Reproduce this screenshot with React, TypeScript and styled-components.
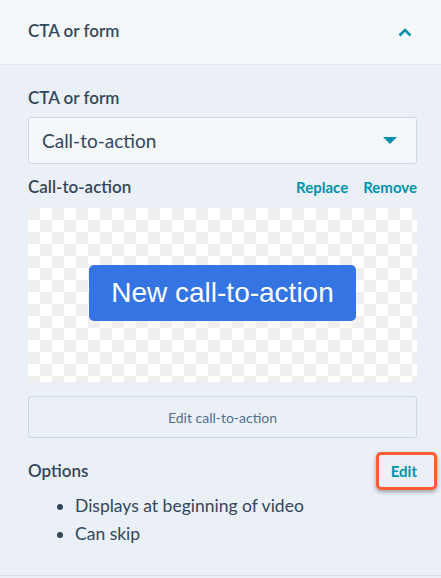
import { FC } from "react";
import styled, { createGlobalStyle } from "styled-components";

const GlobalStyle = createGlobalStyle`
  html, body {
    margin: 0;
    padding: 0;
    background-color: #eaf0f6;
  }

  body {
    color: #33475b;
    font-family: Lato, "Noto Sans", sans-serif;
  }
`;

const Panel = styled.section`
  background-color: #eaf0f6;
  border-bottom: 1px solid #d6dfe8;
  display: flex;
  flex-direction: column;
  height: 575px;
  width: 441px;
`;

const PanelHeader = styled.header`
  align-items: center;
  background-color: #f5f8fa;
  border-bottom: 1px solid #dfe6ee;
  box-sizing: border-box;
  display: flex;
  height: 65px;
  justify-content: space-between;
  padding: 0 29px 0 28px;
`;

const Title = styled.h3`
  font-size: 17px;
  font-weight: 600;
  margin: 0 0 3px;
`;

const Chevron = styled.svg`
  height: 9px;
  width: 14px;
`;

const Body = styled.div`
  display: flex;
  flex-direction: column;
  padding: 22px 24px 0 28px;
`;

const Label = styled.label<{ $gap?: number }>`
  display: block;
  font-size: 17px;
  font-weight: 600;
  line-height: 22px;
  margin-bottom: ${(p) => p.$gap ?? 8}px;
`;

const SelectBox = styled.div`
  align-items: center;
  background-color: #f5f8fa;
  border: 1px solid #cbd6e2;
  border-radius: 3px;
  box-sizing: border-box;
  display: flex;
  font-size: 19px;
  height: 47px;
  justify-content: space-between;
  padding: 0 19px 0 13px;
`;

const Caret = styled.span`
  border-left: 7px solid transparent;
  border-right: 7px solid transparent;
  border-top: 7px solid #0091ae;
  height: 0;
  width: 0;
`;

const Row = styled.div<{ $top: number }>`
  align-items: center;
  display: flex;
  justify-content: space-between;
  margin-top: ${(p) => p.$top}px;
`;

const Links = styled.div`
  display: flex;
  gap: 15px;
`;

const LinkButton = styled.button`
  background: none;
  border: none;
  color: #0091ae;
  cursor: pointer;
  font-family: inherit;
  font-size: 15px;
  font-weight: 700;
  padding: 0;
`;

const Preview = styled.div`
  align-items: center;
  background-color: #ffffff;
  background-image: linear-gradient(45deg, #efefef 25%, transparent 25%, transparent 75%, #efefef 75%),
    linear-gradient(45deg, #efefef 25%, transparent 25%, transparent 75%, #efefef 75%);
  background-position: 12px 0, 0 12px;
  background-size: 24px 24px;
  display: flex;
  height: 174px;
  justify-content: center;
  margin-top: 10px;
`;

const CtaButton = styled.button`
  background-color: #3574e3;
  border: none;
  border-radius: 5px;
  color: #ffffff;
  font-family: "Liberation Sans", Arial, sans-serif;
  font-size: 28px;
  height: 56px;
  margin-bottom: 4px;
  width: 267px;
`;

const SecondaryButton = styled.button`
  background-color: #eaf0f6;
  border: 1px solid #cbd6e2;
  border-radius: 3px;
  color: #516f90;
  font-family: inherit;
  font-size: 14px;
  height: 42px;
  margin-top: 14px;
  width: 100%;
`;

const Highlight = styled.div`
  border: 3px solid #ff5c35;
  border-radius: 5px;
  box-shadow: 0 2px 4px rgba(0, 0, 0, 0.35);
  display: flex;
  justify-content: center;
  margin-right: -20px;
  padding: 7px 17px 7px 12px;
`;

const BulletList = styled.ul`
  font-size: 17.5px;
  line-height: 28px;
  margin: 2px 0 0;
  padding-left: 47px;
`;

export default function App() {
  return (
    <>
      <GlobalStyle />
      <Panel>
        <PanelHeader>
          <Title>CTA or form</Title>
          <Chevron viewBox="0 0 14 9">
            <path d="M1.5 7.5 7 2l5.5 5.5" fill="none" stroke="#0091ae" strokeWidth="2.6" />
          </Chevron>
        </PanelHeader>
        <Body>
          <Label>CTA or form</Label>
          <SelectBox>
            <span>Call-to-action</span>
            <Caret />
          </SelectBox>
          <Row $top={12}>
            <Label $gap={0}>Call-to-action</Label>
            <Links>
              <LinkButton>Replace</LinkButton>
              <LinkButton>Remove</LinkButton>
            </Links>
          </Row>
          <Preview>
            <CtaButton>New call-to-action</CtaButton>
          </Preview>
          <SecondaryButton>Edit call-to-action</SecondaryButton>
          <OptionsBlock />
        </Body>
      </Panel>
    </>
  );
}

const OptionsBlock: FC = () => (
  <>
    <Row $top={14}>
      <Label $gap={0}>Options</Label>
      <Highlight>
        <LinkButton>Edit</LinkButton>
      </Highlight>
    </Row>
    <BulletList>
      <li>Displays at beginning of video</li>
      <li>Can skip</li>
    </BulletList>
  </>
);
